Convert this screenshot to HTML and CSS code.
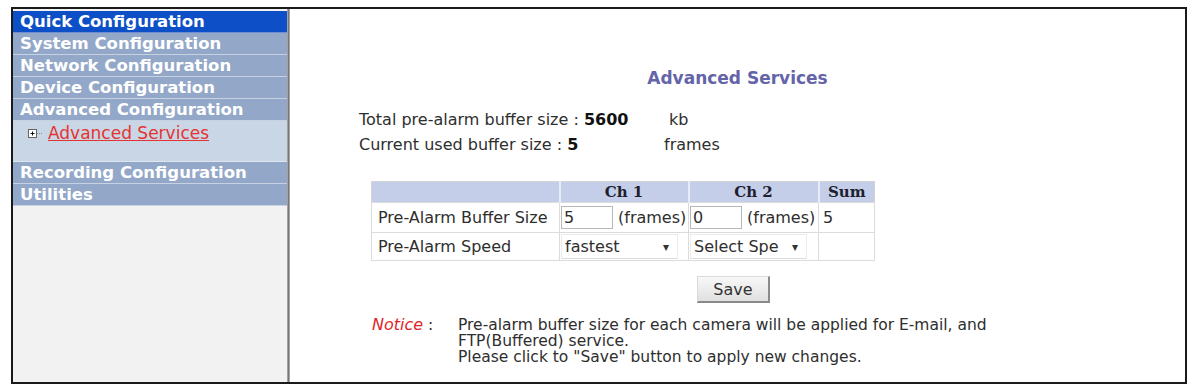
FILE: index.html
```html
<!DOCTYPE html>
<html>
<head>
<meta charset="utf-8">
<link rel="stylesheet" href="styles.css">
</head>
<body>
<div class="frame">
  <div class="side">
    <div class="menu-item active">Quick Configuration</div>
    <div class="menu-item">System Configuration</div>
    <div class="menu-item">Network Configuration</div>
    <div class="menu-item">Device Configuration</div>
    <div class="menu-item">Advanced Configuration</div>
    <div class="sub">
      <div class="sub-item">
        <svg class="plus" width="15" height="11" viewBox="0 0 15 11">
          <rect x="0.5" y="1.5" width="8" height="8" fill="#fff" stroke="#666"/>
          <path d="M2.5 5.5h4M4.5 3.5v4" stroke="#111" stroke-width="1"/>
          <path d="M9 5.5h6" stroke="#888" stroke-width="1" stroke-dasharray="1 1"/>
        </svg>
        <span class="sub-link">Advanced Services</span>
      </div>
    </div>
    <div class="menu-item">Recording Configuration</div>
    <div class="menu-item">Utilities</div>
    <div class="side-rest"></div>
  </div>
  <div class="divider"></div>
  <div class="content">
    <div class="title">Advanced Services</div>
    <div class="inner">
      <div class="info">
        <div class="info-main">Total pre-alarm buffer size : <b>5600</b></div>
        <div class="info-unit">&nbsp;kb</div>
        <div class="info-main">Current used buffer size : <b>5</b></div>
        <div class="info-unit">frames</div>
      </div>
      <table class="grid">
        <colgroup>
          <col class="k0"><col class="k1"><col class="k2"><col class="k3">
        </colgroup>
        <tr class="head">
          <th></th>
          <th>Ch 1</th>
          <th>Ch 2</th>
          <th class="last">Sum</th>
        </tr>
        <tr class="r1">
          <td class="lbl">Pre-Alarm Buffer Size</td>
          <td><span class="inp">5</span><span class="unit">(frames)</span></td>
          <td><span class="inp">0</span><span class="unit">(frames)</span></td>
          <td class="sum">5</td>
        </tr>
        <tr class="r2">
          <td class="lbl">Pre-Alarm Speed</td>
          <td><span class="sel">fastest<span class="arrow">▾</span></span></td>
          <td><span class="sel">Select Spe<span class="arrow">▾</span></span></td>
          <td class="sum"></td>
        </tr>
      </table>
      <div class="actions"><span class="btn">Save</span></div>
      <div class="notice">
        <div class="notice-lbl"><i>Notice</i> :</div>
        <div class="notice-text">Pre-alarm buffer size for each camera will be applied for E-mail, and FTP(Buffered) service.<br>Please click to "Save" button to apply new changes.</div>
      </div>
    </div>
  </div>
</div>
</body>
</html>
```

FILE: styles.css
```css
html, body {
  margin: 0;
  padding: 0;
  background: #ffffff;
}
body {
  font-family: "DejaVu Sans", Verdana, sans-serif;
}
.frame {
  margin: 7px 0 0 11px;
  width: 1172px;
  height: 373px;
  border: 2px solid #1a1a1a;
  display: flex;
  overflow: hidden;
}
.side {
  width: 274px;
  display: flex;
  flex-direction: column;
  background: #f2f2f2;
  padding-top: 2px;
  box-sizing: border-box;
}
.menu-item {
  height: 21px;
  line-height: 21px;
  border-bottom: 1px solid #c6d2e2;
  background: #93a8c8;
  color: #ffffff;
  font-weight: bold;
  font-size: 16.5px;
  padding-left: 7px;
  white-space: nowrap;
  overflow: hidden;
}
.menu-item.active {
  background: #0c4fc6;
  border-bottom-color: #6f8fd0;
}
.sub {
  height: 40px;
  background: #c9d6e5;
  border-bottom: 1px solid #dde5ef;
}
.sub-item {
  display: flex;
  align-items: center;
  padding: 2px 0 0 15px;
  height: 20px;
}
.plus {
  margin-right: 5px;
}
.sub-link {
  color: #e5332f;
  text-decoration: underline;
  font-size: 17px;
  line-height: 20px;
  white-space: nowrap;
}
.side-rest {
  flex: 1;
  background: #f2f2f2;
}
.divider {
  width: 3px;
  background: linear-gradient(to right, #b8b8b8, #6a6a6a 60%, #d0d0d0);
}
.content {
  flex: 1;
  background: #ffffff;
  color: #2e2e2e;
  font-size: 16px;
  display: flex;
  flex-direction: column;
}
.title {
  text-align: center;
  color: #6464a8;
  font-weight: bold;
  font-size: 17px;
  margin-top: 59px;
  height: 21px;
  line-height: 21px;
}
.inner {
  padding-left: 69px;
  display: flex;
  flex-direction: column;
}
.info {
  margin-top: 21px;
  display: grid;
  grid-template-columns: 305px auto;
  row-gap: 6px;
  line-height: 19px;
  white-space: nowrap;
}
.info b {
  color: #111;
}
.grid {
  margin: 27px 0 0 12px;
  border-collapse: collapse;
  width: 503px;
  border: 1px solid #d4d4d4;
  table-layout: fixed;
}
.k0 { width: 188px; }
.k1 { width: 129px; }
.k2 { width: 130px; }
.k3 { width: 56px; }
.grid th {
  background: #c4cee8;
  height: 20px;
  padding: 0;
  font-family: "DejaVu Serif", Georgia, serif;
  font-size: 15px;
  line-height: 20px;
  color: #1e1e30;
  border-right: 2px solid #e8ecf6;
}
.grid th.last { border-right: none; }
.grid td {
  padding: 0;
  border: 1px solid #dcdcdc;
  white-space: nowrap;
  font-size: 16px;
  color: #2e2e2e;
  overflow: hidden;
}
.r1 td { height: 29px; }
.r2 td { height: 27px; }
td.lbl { padding-left: 6px; }
td.sum { padding-left: 4px; }
.inp {
  display: inline-block;
  width: 52px;
  height: 23px;
  line-height: 21px;
  border: 1px solid #b8b8b8;
  box-sizing: border-box;
  padding-left: 2px;
  vertical-align: middle;
  background: #fff;
  margin-left: 1px;
}
.unit {
  margin-left: 5px;
  vertical-align: middle;
}
.sel {
  display: inline-flex;
  justify-content: space-between;
  align-items: center;
  width: 117px;
  height: 25px;
  border: 1px solid #ececec;
  border-bottom-color: #dcdcdc;
  box-sizing: border-box;
  padding: 0 8px 0 3px;
  margin-left: 1px;
  vertical-align: middle;
}
.arrow {
  font-size: 12px;
  color: #333;
}
.actions {
  margin-top: 15px;
  padding-left: 338px;
  display: flex;
}
.btn {
  width: 73px;
  height: 27px;
  line-height: 25px;
  text-align: center;
  box-sizing: border-box;
  border: 1px solid #dadada;
  border-right: 2px solid #8a8a8a;
  border-bottom: 2px solid #8a8a8a;
  background: linear-gradient(#f8f8f8, #e0e0e0);
  font-size: 16px;
  color: #333;
}
.notice {
  margin-top: 14px;
  display: flex;
  padding-left: 13px;
  line-height: 16px;
  font-size: 15.5px;
}
.notice-lbl {
  width: 86px;
  flex-shrink: 0;
  white-space: nowrap;
}
.notice-lbl i {
  color: #e0262a;
  font-size: 16px;
}
.notice-text {
  width: 580px;
}
```
